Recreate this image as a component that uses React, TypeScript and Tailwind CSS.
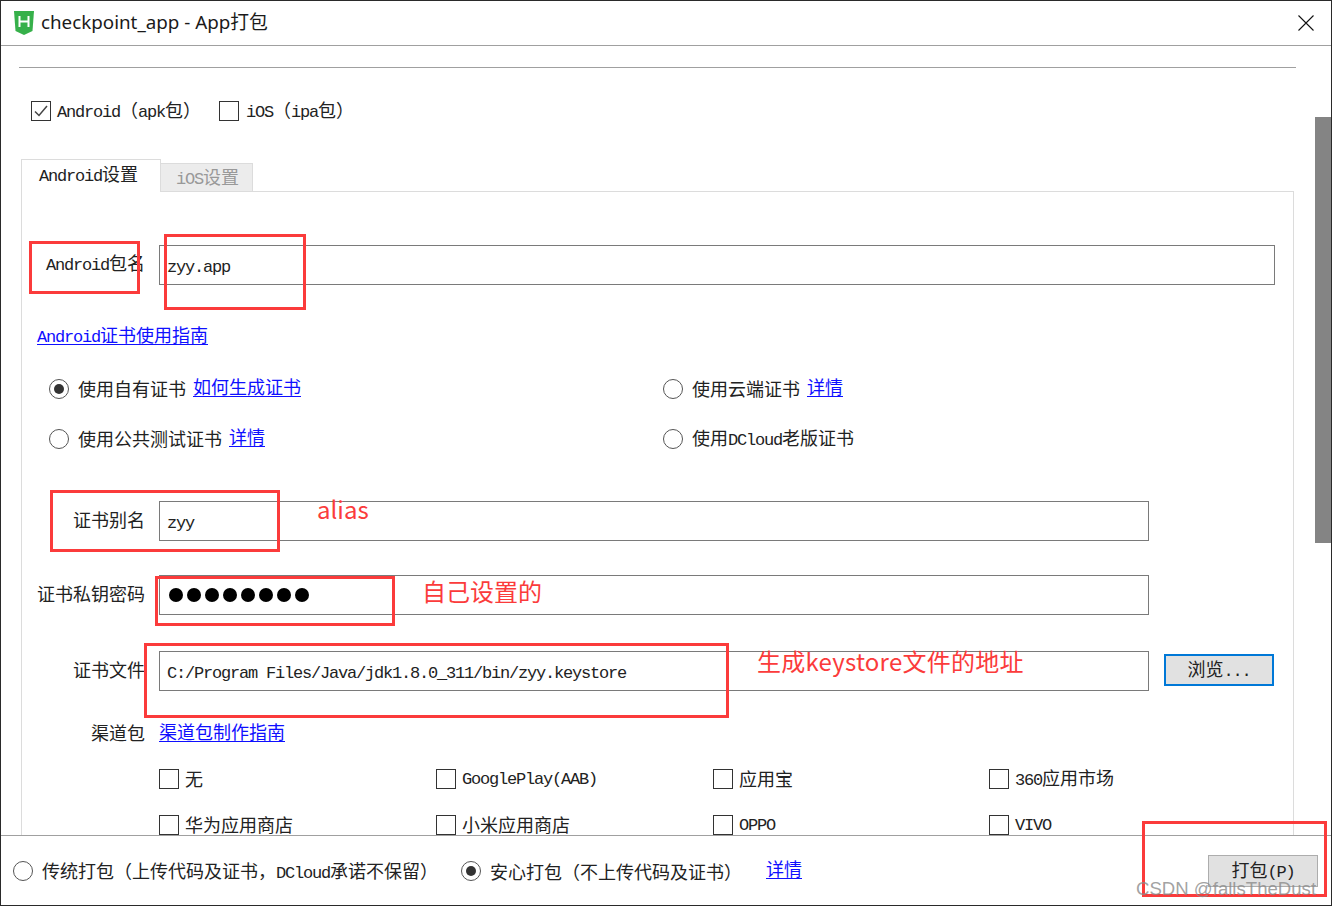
import React from "react";

const cjk = "font-['Noto_Sans_CJK_SC','Noto_Sans',sans-serif] text-[18px]";
const mono = "font-['Liberation_Mono','Noto_Sans_CJK_SC',monospace] text-[17px] tracking-[-1.2px]";

function T({ s }: { s: string }) {
  const parts = s.split(/([\x20-\x7e]+)/).filter(Boolean);
  return (
    <span>
      {parts.map((p, i) =>
        /^[\x20-\x7e]+$/.test(p) ? (
          <span key={i} className={mono + " whitespace-pre"}>{p}</span>
        ) : (
          <span key={i} className={cjk}>{p}</span>
        )
      )}
    </span>
  );
}

function Link({ s }: { s: string }) {
  return (
    <span className="text-[#0f0fff] underline underline-offset-2 decoration-1 leading-none">
      <T s={s} />
    </span>
  );
}

function Check({ on = false }: { on?: boolean }) {
  return (
    <span className="w-[20px] h-[20px] shrink-0 border border-[#333] bg-white flex items-center justify-center">
      {on && (
        <svg width="16" height="14" viewBox="0 0 16 14" fill="none">
          <path d="M2 7.5 L6 11.5 L14 2" stroke="#444" strokeWidth="1.5" />
        </svg>
      )}
    </span>
  );
}

function Radio({ on = false }: { on?: boolean }) {
  return (
    <span className="w-[20px] h-[20px] shrink-0 rounded-full border border-[#555] bg-white flex items-center justify-center">
      {on && <span className="w-[10px] h-[10px] rounded-full bg-[#333]" />}
    </span>
  );
}

function Opt({ s, children, on }: { s: string; children?: React.ReactNode; on?: boolean }) {
  return (
    <div className="flex items-center h-[24px] text-[#222]">
      <Radio on={on} />
      <span className="ml-[9px] leading-[24px]"><T s={s} /></span>
      {children && <span className="ml-[7px] leading-[24px] -mt-[2px]">{children}</span>}
    </div>
  );
}

function Ck({ s }: { s: string }) {
  return (
    <div className="flex items-center gap-[6px] h-[20px] text-[#222] leading-[20px]">
      <Check />
      <span><T s={s} /></span>
    </div>
  );
}

function Label({ s }: { s: string }) {
  return (
    <div className="w-[123px] shrink-0 mr-[14px] text-right text-[#222] whitespace-nowrap leading-[24px] -mt-[2px]">
      <T s={s} />
    </div>
  );
}

function Field({ w, children }: { w: string; children?: React.ReactNode }) {
  return (
    <div className={"h-[40px] border border-[#7a7a7a] bg-white flex items-center pl-[7px] text-[#222] " + w}>
      {children}
    </div>
  );
}

function Box({ c }: { c: string }) {
  return <div className={"absolute border-[3px] border-[#fb3b3b] " + c} />;
}

function Note({ c, s }: { c: string; s: string }) {
  return (
    <div className={"absolute text-[#fb3b3b] text-[24px] leading-[32px] whitespace-nowrap font-['Noto_Sans_CJK_SC','Noto_Sans',sans-serif] " + c}>
      {s}
    </div>
  );
}

export default function App() {
  return (
    <div className="relative w-[1332px] h-[906px] bg-white overflow-hidden">
      <div className="flex flex-col h-full border border-[#2a2a2a]">
        {/* title bar */}
        <div className="h-[45px] shrink-0 border-b border-[#a0a0a0] flex items-center pl-[13px] pr-[17px]">
          <svg width="20" height="24" viewBox="0 0 20 24" className="shrink-0">
            <path d="M0 0 H20 L18.5 20 L10 24 L1.5 20 Z" fill="#36b04a" />
            <path d="M5.5 5 V16 M14.5 5 V16 M5.5 10.5 H14.5" stroke="#fff" strokeWidth="2" fill="none" />
          </svg>
          <div className="ml-[7px] -mt-[2px] text-[18.8px] text-[#1a1a1a] leading-[24px] whitespace-nowrap font-['Noto_Sans','Noto_Sans_CJK_SC',sans-serif]">
            checkpoint_app - App打包
          </div>
          <svg width="16" height="16" viewBox="0 0 16 16" className="ml-auto" fill="none">
            <path d="M0.5 0.5 L15.5 15.5 M15.5 0.5 L0.5 15.5" stroke="#111" strokeWidth="1.1" />
          </svg>
        </div>

        {/* body */}
        <div className="flex-1 flex min-h-0">
          <div className="flex-1 min-w-0 overflow-hidden pl-[18px]">
            <div className="mt-[21px] h-px w-[1277px] bg-[#a0a0a0]" />
            <div className="mt-[33px] flex items-center h-[20px] pl-[12px] text-[#222] leading-[20px]">
              <Check on />
              <span className="ml-[6px] w-[162px] whitespace-nowrap"><T s="Android（apk包）" /></span>
              <Check />
              <span className="ml-[7px] whitespace-nowrap"><T s="iOS（ipa包）" /></span>
            </div>

            {/* tabs */}
            <div className="mt-[38px] ml-[2px] flex items-end relative z-10">
              <div className="w-[140px] h-[33px] border border-b-0 border-[#dcdcdc] bg-white pl-[17px] flex items-center text-[#222] -mb-px relative">
                <span className="leading-[24px] -mt-[2px]"><T s="Android设置" /></span>
              </div>
              <div className="w-[92px] h-[28px] border border-l-0 border-b-0 border-[#dcdcdc] bg-[#ececec] pl-[15px] flex items-center text-[#999]">
                <span className="leading-[24px]"><T s="iOS设置" /></span>
              </div>
            </div>

            {/* panel */}
            <div className="ml-[2px] w-[1273px] border border-b-0 border-[#dcdcdc] pt-[53px]">
              <div className="flex items-center">
                <Label s="Android包名" />
                <Field w="w-[1116px] pt-[4px]"><T s="zyy.app" /></Field>
              </div>

              <div className="mt-[39px] h-[24px] pl-[15px] leading-[24px]">
                <Link s="Android证书使用指南" />
              </div>

              <div className="mt-[29px] pl-[27px] grid grid-cols-[614px_1fr] gap-y-[26px]">
                <Opt s="使用自有证书" on><Link s="如何生成证书" /></Opt>
                <Opt s="使用云端证书"><Link s="详情" /></Opt>
                <Opt s="使用公共测试证书"><Link s="详情" /></Opt>
                <Opt s="使用DCloud老版证书" />
              </div>

              <div className="mt-[50px] flex items-center">
                <Label s="证书别名" />
                <Field w="w-[990px] pt-[4px]"><T s="zyy" /></Field>
              </div>

              <div className="mt-[34px] flex items-center">
                <Label s="证书私钥密码" />
                <Field w="w-[990px] gap-[4px] pl-[9px]">
                  {[0, 1, 2, 3, 4, 5, 6, 7].map((i) => (
                    <span key={i} className="w-[14px] h-[14px] rounded-full bg-black" />
                  ))}
                </Field>
              </div>

              <div className="mt-[36px] flex items-center">
                <Label s="证书文件" />
                <Field w="w-[990px] pt-[4px]"><T s="C:/Program Files/Java/jdk1.8.0_311/bin/zyy.keystore" /></Field>
                <div className="ml-[15px] -mt-[2px] w-[110px] h-[32px] border-2 border-[#0078d7] bg-[#e1e1e1] flex items-center justify-center text-[#222] leading-[24px]">
                  <T s="浏览..." />
                </div>
              </div>

              <div className="mt-[31px] h-[24px] flex items-center">
                <Label s="渠道包" />
                <span className="leading-[24px] -mt-[2px]"><Link s="渠道包制作指南" /></span>
              </div>

              <div className="mt-[23px] ml-[137px] grid grid-cols-[277px_277px_276px_1fr] gap-y-[26px]">
                <Ck s="无" />
                <Ck s="GooglePlay(AAB)" />
                <Ck s="应用宝" />
                <Ck s="360应用市场" />
                <Ck s="华为应用商店" />
                <Ck s="小米应用商店" />
                <Ck s="OPPO" />
                <Ck s="VIVO" />
              </div>
            </div>
          </div>

          {/* scrollbar */}
          <div className="w-[16px] shrink-0 pt-[71px]">
            <div className="h-[426px] bg-[#848484]" />
          </div>
        </div>

        {/* footer */}
        <div className="h-[70px] shrink-0 border-t border-[#a0a0a0] flex items-center pl-[12px] pr-[13px] text-[#222]">
          <Radio />
          <span className="ml-[9px] mt-[2px] w-[419px] whitespace-nowrap leading-[24px]"><T s="传统打包（上传代码及证书，DCloud承诺不保留）" /></span>
          <Radio on />
          <span className="ml-[9px] mt-[2px] w-[276px] whitespace-nowrap leading-[24px]"><T s="安心打包（不上传代码及证书）" /></span>
          <span className="leading-[24px] -mt-[2px]"><Link s="详情" /></span>
          <div className="ml-auto w-[110px] h-[32px] mt-[1px] border border-[#adadad] bg-[#e1e1e1] flex items-center justify-center text-[#222] leading-[24px]">
            <T s="打包(P)" />
          </div>
        </div>
      </div>

      {/* annotations */}
      <Box c="left-[29px] top-[241px] w-[111px] h-[53px]" />
      <Box c="left-[164px] top-[234px] w-[142px] h-[76px]" />
      <Box c="left-[50px] top-[490px] w-[230px] h-[62px]" />
      <Box c="left-[155px] top-[576px] w-[240px] h-[50px]" />
      <Box c="left-[144px] top-[643px] w-[585px] h-[75px]" />
      <Box c="left-[1142px] top-[821px] w-[185px] h-[76px]" />
      <Note c="left-[317px] top-[493px]" s="alias" />
      <Note c="left-[422px] top-[575px]" s="自己设置的" />
      <Note c="left-[757px] top-[645px] tracking-[0.25px]" s="生成keystore文件的地址" />
      <div className="absolute left-[1136px] top-[877px] text-[18.6px] leading-[24px] whitespace-nowrap text-[#8a8a8a]/80 font-['Liberation_Sans',sans-serif]">
        CSDN @fallsTheDust
      </div>
    </div>
  );
}
